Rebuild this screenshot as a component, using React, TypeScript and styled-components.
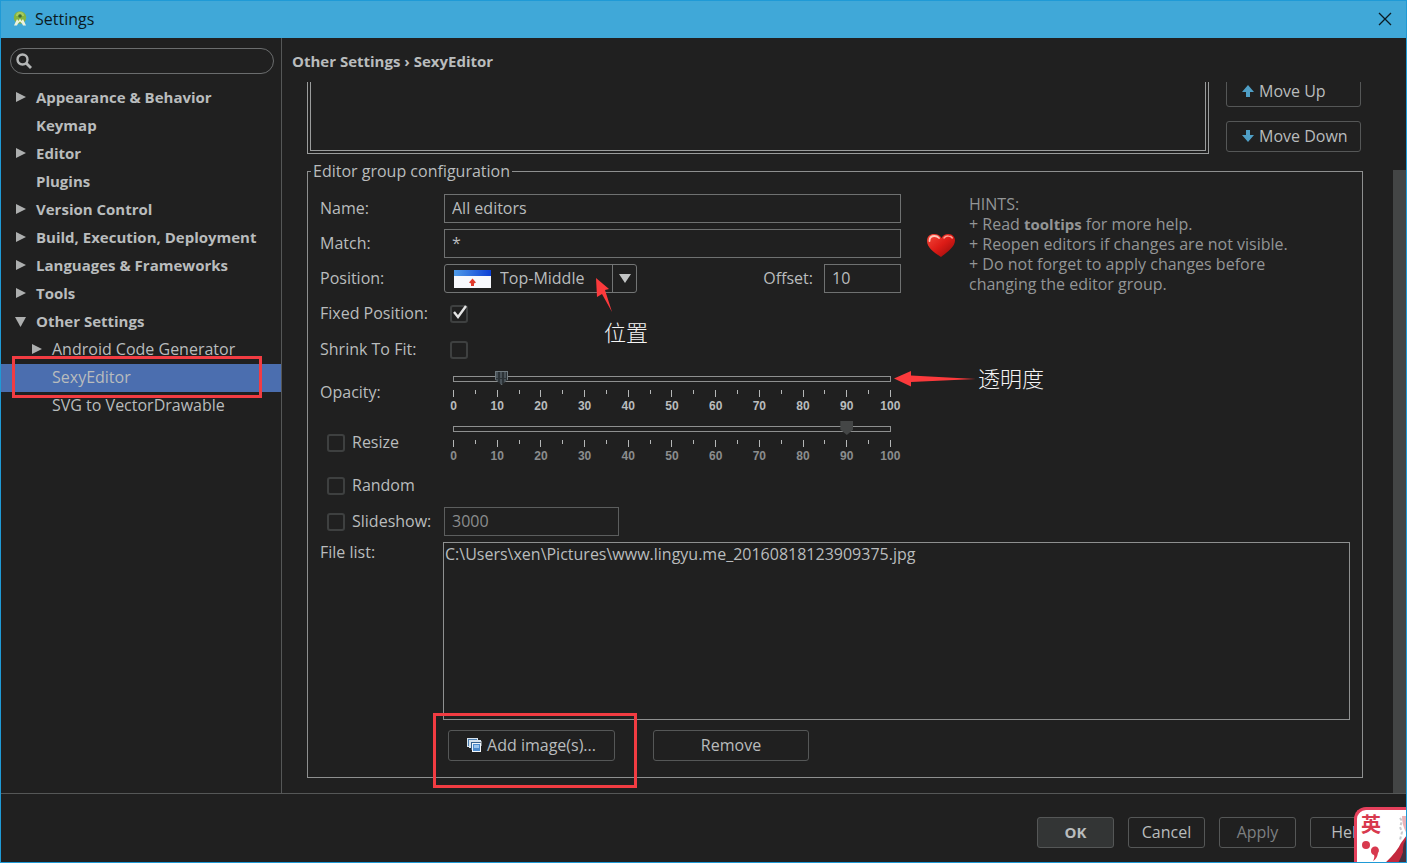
import React, { useState } from "react";
import styled, { createGlobalStyle, css } from "styled-components";

const GlobalStyle = createGlobalStyle`
  *, *::before, *::after { box-sizing: border-box; }
  body { margin: 0; background: #202020; }
  body, button, input, select {
    font-family: "Open Sans", "Noto Sans CJK SC", sans-serif;
    font-size: 16px;
    line-height: 20px;
    color: #b9bcbd;
  }
  b { font-size: 15px; }
  button, input, select { outline: none; }
`;

const Window = styled.div`
  position: relative;
  display: flex;
  flex-direction: column;
  min-height: 100vh;
  overflow: hidden;
  background: #202020;
  border: 1px solid #1f9ad6;
`;

const TitleBar = styled.header`
  display: flex;
  align-items: center;
  height: 37px;
  padding: 0 14px 2px 11px;
  background: #40a8d8;
  color: #0b1a22;
`;

const Title = styled.h1`
  flex: 1;
  margin: 0 0 0 7px;
  font-size: 16px;
  font-weight: 400;
`;

const CloseButton = styled.button`
  display: flex;
  padding: 0;
  border: 0;
  background: none;
  color: #0b1a22;
`;

const Body = styled.div`
  display: flex;
  flex: 1;
`;

const Sidebar = styled.aside`
  flex: none;
  width: 281px;
  border-right: 1px solid #555757;
`;

const SearchBox = styled.label`
  display: flex;
  align-items: center;
  gap: 6px;
  height: 26px;
  margin: 10px 7px 10px 9px;
  padding: 0 12px 0 5px;
  border: 1px solid #6b6d6e;
  border-radius: 13px;
`;

const SearchInput = styled.input`
  flex: 1;
  min-width: 0;
  border: 0;
  background: none;
`;

const Tree = styled.ul`
  margin: 0;
  padding: 0;
  list-style: none;
`;

const TreeRow = styled.li<{ $depth: number; $selected?: boolean }>`
  position: relative;
  display: flex;
  align-items: center;
  height: 28px;
  padding-bottom: 2px;
  padding-left: ${(p) => 14 + p.$depth * 16}px;
  font-size: ${(p) => (p.$depth ? 16 : 15)}px;
  font-weight: ${(p) => (p.$depth ? 400 : 700)};
  background: ${(p) => (p.$selected ? "#4b6eaf" : "none")};
`;

const TreeArrow = styled.span`
  display: flex;
  flex: none;
  width: 21px;
`;

const Marker = styled.span<{ $top: number; $right: number; $bottom: number; $left: number }>`
  position: absolute;
  z-index: 1;
  top: ${(p) => p.$top}px;
  right: ${(p) => p.$right}px;
  bottom: ${(p) => p.$bottom}px;
  left: ${(p) => p.$left}px;
  border: 3px solid #f23c42;
  pointer-events: none;
`;

const Content = styled.main`
  display: flex;
  flex: 1;
  flex-direction: column;
  min-width: 0;
`;

const Breadcrumb = styled.h2`
  height: 44px;
  margin: 0;
  padding: 13px 10px 0;
  font-size: 15px;
  font-weight: 700;
  line-height: 20px;
`;

const Viewport = styled.div`
  display: flex;
  flex: 1;
`;

const Page = styled.div`
  flex: 1;
  min-width: 0;
  padding: 0 30px 15px 25px;
`;

const ScrollTrack = styled.div`
  display: flex;
  width: 13px;
  padding-top: 88px;
`;

const ScrollThumb = styled.div`
  flex: 1;
  background: #434545;
`;

const GroupRow = styled.div`
  display: flex;
  gap: 17px;
  height: 72px;
  margin-bottom: 7px;
  padding-right: 2px;
  overflow: hidden;
`;

const GroupList = styled.div`
  flex: 1;
  padding: 0 2px 2px;
  border: 1px solid #9a9c9c;
  border-top: 0;

  &::before {
    content: "";
    display: block;
    height: 100%;
    border: 1px solid #9a9c9c;
    border-top: 0;
  }
`;

const MoveButtons = styled.div`
  display: flex;
  flex-direction: column;
  justify-content: flex-end;
  gap: 14px;
  width: 135px;
  padding-bottom: 2px;
`;

const Button = styled.button<{ $width?: number; $kind?: "primary" | "disabled"; $start?: boolean }>`
  display: flex;
  flex: none;
  align-items: center;
  justify-content: ${(p) => (p.$start ? "flex-start" : "center")};
  gap: 5px;
  width: ${(p) => (p.$width ? `${p.$width}px` : "auto")};
  height: 31px;
  padding: ${(p) => (p.$start ? "0 0 2px 15px" : "0 0 2px")};
  border: 1px solid #555757;
  border-radius: 3px;
  background: #202020;
  white-space: nowrap;
  ${(p) => p.$kind === "primary" && css`background: #333535; font-size: 15px; font-weight: 700;`}
  ${(p) => p.$kind === "disabled" && css`color: #7d7f80;`}
`;

const Group = styled.fieldset`
  min-width: 0;
  margin: 0;
  padding: 13px 12px 16px;
  border: 1px solid #8e9090;
`;

const Legend = styled.legend`
  margin-left: -9px;
  padding: 0 2px;
  line-height: 20px;
`;

const FormTop = styled.div`
  display: flex;
  align-items: flex-start;
  gap: 25px;
  margin-bottom: 6px;
`;

const Form = styled.div`
  display: flex;
  flex: none;
  flex-direction: column;
  gap: 6px;
  width: 581px;
`;

const Row = styled.div<{ $height: number }>`
  position: relative;
  display: flex;
  align-items: center;
  height: ${(p) => p.$height}px;
`;

const Label = styled.label`
  flex: none;
  width: 124px;
  padding-bottom: 2px;
`;

const CheckLabel = styled.label`
  display: flex;
  flex: none;
  align-items: center;
  gap: 7px;
  width: 124px;
  padding-left: 7px;
  white-space: nowrap;
`;

const CheckText = styled.span`
  padding-bottom: 2px;
`;

const TextInput = styled.input<{ $width?: number }>`
  width: ${(p) => (p.$width ? `${p.$width}px` : "auto")};
  flex: ${(p) => (p.$width ? "none" : "1")};
  height: 29px;
  padding: 0 7px 2px;
  border: 1px solid #6f7171;
  background: none;

  &:disabled { color: #8b8d8e; border-color: #5c5e5e; }
`;

const SelectBox = styled.div`
  position: relative;
  width: 193px;
  height: 29px;
`;

const Select = styled.select`
  width: 100%;
  height: 29px;
  padding: 0 20px 2px 55px;
  appearance: none;
  border: 1px solid #737575;
  border-radius: 3px;
  background: none;
`;

const SelectPicture = styled.svg`
  position: absolute;
  top: 6px;
  left: 10px;
  pointer-events: none;
`;

const SelectArrow = styled.span`
  position: absolute;
  top: 1px;
  right: 0;
  display: flex;
  align-items: center;
  justify-content: center;
  width: 25px;
  height: 27px;
  border-left: 1px solid #737575;
  pointer-events: none;
`;

const OffsetLabel = styled.label`
  margin-left: auto;
  margin-right: 11px;
  padding-bottom: 2px;
`;

const CheckBox = styled.input`
  display: grid;
  place-items: center;
  flex: none;
  width: 18px;
  height: 18px;
  margin: 0;
  appearance: none;
  border: 2px solid #3e4040;
  border-radius: 3px;
`;

const CheckCell = styled.span`
  position: relative;
  display: flex;
  margin-left: 6px;
`;

const CheckMark = styled.svg`
  position: absolute;
  top: 0;
  left: 2px;
  pointer-events: none;
`;

const SliderBox = styled.div`
  flex: none;
  width: 438px;
  height: 44px;
  margin-left: 9px;
  padding-top: 5px;
`;

const Rail = styled.div`
  height: 6px;
  margin-bottom: 8px;
  border: 1px solid #8e9090;
`;

const Range = styled.input`
  display: block;
  width: calc(100% + 14px);
  height: 14px;
  margin: -6px -7px;
  appearance: none;
  background: none;

  &::-webkit-slider-thumb {
    appearance: none;
    width: 13px;
    height: 14px;
    clip-path: polygon(0 0, 100% 0, 100% 60%, 50% 100%, 0 60%);
    background: ${(p) =>
      p.disabled
        ? "#444646"
        : "linear-gradient(#2c3236, #2c3236) 50% 50% / 100% 1px no-repeat, repeating-linear-gradient(90deg, #4a5359 0 2px, #2c3236 2px 4px)"};
    border: ${(p) => (p.disabled ? "0" : "1px solid #717b81")};
  }
`;

const Ticks = styled.div`
  display: flex;
  justify-content: space-between;
  height: 7px;
  margin-bottom: 3px;
`;

const Tick = styled.span<{ $major: boolean }>`
  width: 1px;
  height: ${(p) => (p.$major ? 7 : 4)}px;
  background: #b5b7b7;
`;

const TickLabels = styled.div<{ $dim?: boolean }>`
  display: flex;
  justify-content: space-between;
  font: 700 12px/12px "Liberation Sans", Arial, sans-serif;
  color: ${(p) => (p.$dim ? "#8b8d8e" : "#b9bcbd")};
`;

const TickLabel = styled.span`
  display: flex;
  justify-content: center;
  width: 1px;
`;

const Hints = styled.div`
  display: flex;
  align-items: center;
  gap: 13px;
  color: #939596;

  p { max-width: 340px; margin: 0; padding-bottom: 2px; }
  svg { flex: none; }
`;

const FileRow = styled.div`
  display: flex;
`;

const FileColumn = styled.div`
  flex: 1;
  min-width: 0;
`;

const FileList = styled.ul`
  height: 178px;
  margin: 0 0 10px -1px;
  padding: 1px;
  border: 1px solid #8e9090;
  list-style: none;
`;

const FileButtons = styled.div`
  display: flex;
  gap: 38px;
  padding-left: 4px;
`;

const Marked = styled.span`
  position: relative;
  display: flex;
`;

const Note = styled.span<{ $left: number; $top: number }>`
  position: absolute;
  z-index: 1;
  left: ${(p) => p.$left}px;
  top: ${(p) => p.$top}px;
  font-family: "Noto Sans CJK SC", sans-serif;
  font-size: 22px;
  font-weight: 300;
  line-height: 28px;
  color: #f4f4f4;
  white-space: nowrap;
`;

const NoteArrow = styled.svg<{ $left: number; $top: number }>`
  position: absolute;
  z-index: 1;
  left: ${(p) => p.$left}px;
  top: ${(p) => p.$top}px;
  pointer-events: none;
`;

const Footer = styled.footer`
  display: flex;
  justify-content: flex-end;
  gap: 14px;
  padding: 23px 19px 14px;
  border-top: 1px solid #555757;
`;

const ImeBadge = styled.div`
  position: absolute;
  right: -1px;
  bottom: -1px;
  width: 53px;
  height: 56px;
  overflow: hidden;
  border: 3px solid #e5405c;
  border-right: 0;
  border-bottom: 0;
  border-radius: 12px 0 0 0;
  background: #fff;
`;

const ImeText = styled.span`
  position: absolute;
  top: 2px;
  left: 4px;
  font: 700 20px/24px "Noto Sans CJK SC", sans-serif;
  color: #d8394e;
`;

const ImeArt = styled.svg`
  position: absolute;
  inset: 0;
`;

type Node = { label: string; depth: number; arrow?: "right" | "down"; selected?: boolean };

const nodes: Node[] = [
  { label: "Appearance & Behavior", depth: 0, arrow: "right" },
  { label: "Keymap", depth: 0 },
  { label: "Editor", depth: 0, arrow: "right" },
  { label: "Plugins", depth: 0 },
  { label: "Version Control", depth: 0, arrow: "right" },
  { label: "Build, Execution, Deployment", depth: 0, arrow: "right" },
  { label: "Languages & Frameworks", depth: 0, arrow: "right" },
  { label: "Tools", depth: 0, arrow: "right" },
  { label: "Other Settings", depth: 0, arrow: "down" },
  { label: "Android Code Generator", depth: 1, arrow: "right" },
  { label: "SexyEditor", depth: 1, selected: true },
  { label: "SVG to VectorDrawable", depth: 1 },
];

const steps = Array.from({ length: 21 }, (_, i) => i);

function Slider(props: { id: string; label?: string; start: number; disabled?: boolean }) {
  const [value, setValue] = useState(props.start);
  return (
    <SliderBox>
      <Rail>
        <Range
          id={props.id}
          type="range"
          min={0}
          max={100}
          aria-label={props.label}
          value={value}
          disabled={props.disabled}
          onChange={(e) => setValue(Number(e.target.value))}
        />
      </Rail>
      <Ticks>
        {steps.map((i) => (
          <Tick key={i} $major={i % 2 === 0} />
        ))}
      </Ticks>
      <TickLabels $dim={props.disabled}>
        {steps.filter((i) => i % 2 === 0).map((i) => (
          <TickLabel key={i}>{i * 5}</TickLabel>
        ))}
      </TickLabels>
    </SliderBox>
  );
}

function MoveIcon({ down }: { down?: boolean }) {
  return (
    <svg width="12" height="12" viewBox="0 0 12 12" aria-hidden="true">
      <path
        d={down ? "M4 0h4v5h4L6 12 0 5h4z" : "M6 0l6 7H8v5H4V7H0z"}
        fill="#4f9fc6"
      />
    </svg>
  );
}

function AppIcon() {
  return (
    <svg width="16" height="16" viewBox="0 0 16 16" aria-hidden="true">
      <circle cx="8" cy="6.500" r="6.200" fill="#86b440" />
      <path d="M4 5a4 4 0 0 1 8 0z" fill="#a8cc5e" />
      <circle cx="8" cy="5" r="1.800" fill="#3e6a35" />
      <path d="M5 8L2 14.500h3l1-2 2-2 2 2 1 2h3L11 8 9.500 10 8 7.500 6.500 10z" fill="#eef2dc" />
    </svg>
  );
}

function Heart() {
  return (
    <svg width="30" height="25" viewBox="0 0 30 25" aria-hidden="true">
      <defs>
        <linearGradient id="heart" x1="0" y1="0" x2="1" y2="1">
          <stop offset="0" stopColor="#f5483a" />
          <stop offset="0.5" stopColor="#dc1b16" />
          <stop offset="1" stopColor="#8e0b0b" />
        </linearGradient>
      </defs>
      <path
        d="M15 24C9 20 1 15 1 8 1 3.500 4 1 8 1c3.500 0 6 1.500 7.500 4C17 2.500 19 1 22.500 1 26.500 1 29 4 29 7.500 29 14 20 20 15 24z"
        fill="url(#heart)"
      />
      <path d="M3.500 8C3.500 4.500 6 3 8.500 3c2 0 3.500.8 4.500 2" fill="none" stroke="#ffc5b8" strokeWidth="1.800" strokeLinecap="round" />
      <path d="M18 5c1-1.500 2.500-2.200 4.500-2 1.500 0 3 .8 3.800 2" fill="none" stroke="#ff9d8e" strokeWidth="1.500" strokeLinecap="round" />
    </svg>
  );
}

function ImagesIcon() {
  return (
    <svg width="15" height="16" viewBox="0 0 15 16" aria-hidden="true">
      <rect x="0.500" y="1.500" width="10" height="8" fill="#4d7fb0" stroke="#d8e4ee" />
      <path d="M3 11V4h11" fill="none" stroke="#d8e4ee" strokeWidth="2" />
      <path d="M14 4v5" stroke="#d8e4ee" />
      <rect x="4" y="5" width="9" height="8" fill="#35628f" />
      <rect x="5.500" y="6.500" width="8" height="8" fill="#4f8ccc" stroke="#f2f7fb" />
      <rect x="7" y="8" width="5" height="3" fill="#9cc6ee" />
    </svg>
  );
}

export default function App() {
  const [fixed, setFixed] = useState(true);
  return (
    <>
      <GlobalStyle />
      <Window>
        <TitleBar>
          <AppIcon />
          <Title>Settings</Title>
          <CloseButton aria-label="Close">
            <svg width="14" height="14" viewBox="0 0 14 14">
              <path d="M1 1l12 12M13 1L1 13" stroke="currentColor" strokeWidth="1.300" />
            </svg>
          </CloseButton>
        </TitleBar>
        <Body>
          <Sidebar>
            <SearchBox>
              <svg width="16" height="16" viewBox="0 0 16 16" aria-hidden="true">
                <circle cx="6.500" cy="6.500" r="5" fill="none" stroke="#b4b6b6" strokeWidth="2.400" />
                <path d="M10 10l5 5" stroke="#b4b6b6" strokeWidth="2.800" />
              </svg>
              <SearchInput type="text" aria-label="Search settings" />
            </SearchBox>
            <Tree>
              {nodes.map((n) => (
                <TreeRow key={n.label} $depth={n.depth} $selected={n.selected}>
                  <TreeArrow>
                    {n.arrow && (
                      <svg width="11" height="12" viewBox="0 0 11 12" aria-hidden="true">
                        <path d={n.arrow === "right" ? "M1 1l10 5-10 5z" : "M0 2h11L5.500 12z"} fill="#adafaf" />
                      </svg>
                    )}
                  </TreeArrow>
                  {n.label}
                  {n.selected && <Marker $top={-8} $right={19} $bottom={-6} $left={11} />}
                </TreeRow>
              ))}
            </Tree>
          </Sidebar>
          <Content>
            <Breadcrumb>Other Settings › SexyEditor</Breadcrumb>
            <Viewport>
              <Page>
                <GroupRow>
                  <GroupList />
                  <MoveButtons>
                    <Button $start><MoveIcon />Move Up</Button>
                    <Button $start><MoveIcon down />Move Down</Button>
                  </MoveButtons>
                </GroupRow>
                <Group>
                  <Legend>Editor group configuration</Legend>
                  <FormTop>
                    <Form>
                      <Row $height={29}>
                        <Label htmlFor="name">Name:</Label>
                        <TextInput id="name" defaultValue="All editors" />
                      </Row>
                      <Row $height={29}>
                        <Label htmlFor="match">Match:</Label>
                        <TextInput id="match" defaultValue="*" />
                      </Row>
                      <Row $height={29}>
                        <Label htmlFor="position">Position:</Label>
                        <SelectBox>
                          <Select id="position" defaultValue="Top-Middle">
                            <option>Top-Middle</option>
                          </Select>
                          <SelectPicture width="37" height="18" viewBox="0 0 37 18" aria-hidden="true">
                            <defs>
                              <linearGradient id="bar" x1="0" x2="1">
                                <stop offset="0" stopColor="#4f9be8" />
                                <stop offset="1" stopColor="#0c3fd6" />
                              </linearGradient>
                            </defs>
                            <rect width="37" height="18" fill="#f7f8fc" />
                            <rect width="37" height="6" fill="url(#bar)" />
                            <path d="M18.500 8.500l3.500 4-2 1v2.500h-3v-2.500l-2-1z" fill="#e0392c" />
                          </SelectPicture>
                          <SelectArrow>
                            <svg width="12" height="9" viewBox="0 0 12 9" aria-hidden="true">
                              <path d="M0 0h12L6 9z" fill="#c3c5c5" />
                            </svg>
                          </SelectArrow>
                        </SelectBox>
                        <OffsetLabel htmlFor="offset">Offset:</OffsetLabel>
                        <TextInput id="offset" $width={77} defaultValue="10" />
                        <NoteArrow $left={275} $top={14} width="20" height="36" viewBox="0 0 20 36">
                          <path d="M1 0l13 11-4 1 7 22L7 16l-5 3z" fill="#fb3a3c" />
                        </NoteArrow>
                        <Note $left={284} $top={53}>位置</Note>
                      </Row>
                      <Row $height={30}>
                        <Label htmlFor="fixed">Fixed Position:</Label>
                        <CheckCell>
                          <CheckBox
                            id="fixed"
                            type="checkbox"
                            checked={fixed}
                            onChange={(e) => setFixed(e.target.checked)}
                          />
                          {fixed && (
                            <CheckMark width="16" height="16" viewBox="0 0 16 16">
                              <path d="M2 7l4 5 8-11" fill="none" stroke="#e4e4e4" strokeWidth="2.400" />
                            </CheckMark>
                          )}
                        </CheckCell>
                      </Row>
                      <Row $height={30}>
                        <Label htmlFor="shrink">Shrink To Fit:</Label>
                        <CheckCell>
                          <CheckBox id="shrink" type="checkbox" />
                        </CheckCell>
                      </Row>
                      <Row $height={44}>
                        <Label htmlFor="opacity">Opacity:</Label>
                        <Slider id="opacity" start={11} />
                        <NoteArrow $left={574} $top={0} width="84" height="16" viewBox="0 0 84 16">
                          <path d="M0 7.500L17 0v4.500L82 8 17 11v4.500z" fill="#fb3a3c" />
                        </NoteArrow>
                        <Note $left={658} $top={-8}>透明度</Note>
                      </Row>
                      <Row $height={44}>
                        <CheckLabel>
                          <CheckBox type="checkbox" />
                          <CheckText>Resize</CheckText>
                        </CheckLabel>
                        <Slider id="resize" label="Resize percentage" start={90} disabled />
                      </Row>
                      <Row $height={30}>
                        <CheckLabel>
                          <CheckBox type="checkbox" />
                          <CheckText>Random</CheckText>
                        </CheckLabel>
                      </Row>
                      <Row $height={29}>
                        <CheckLabel>
                          <CheckBox type="checkbox" />
                          <CheckText>Slideshow:</CheckText>
                        </CheckLabel>
                        <TextInput $width={175} defaultValue="3000" aria-label="Slideshow interval" disabled />
                      </Row>
                    </Form>
                    <Hints>
                      <Heart />
                      <p>
                        HINTS:<br />
                        + Read <b>tooltips</b> for more help.<br />
                        + Reopen editors if changes are not visible.<br />
                        + Do not forget to apply changes before<br />
                        changing the editor group.
                      </p>
                    </Hints>
                  </FormTop>
                  <FileRow>
                    <Label as="span">File list:</Label>
                    <FileColumn>
                      <FileList aria-label="File list">
                        <li>C:\Users\xen\Pictures\www.lingyu.me_20160818123909375.jpg</li>
                      </FileList>
                      <FileButtons>
                        <Marked>
                          <Button $width={167}><ImagesIcon />Add image(s)...</Button>
                          <Marker $top={-17} $right={-22} $bottom={-27} $left={-15} />
                        </Marked>
                        <Button $width={156}>Remove</Button>
                      </FileButtons>
                    </FileColumn>
                  </FileRow>
                </Group>
              </Page>
              <ScrollTrack>
                <ScrollThumb />
              </ScrollTrack>
            </Viewport>
          </Content>
        </Body>
        <Footer>
          <Button $width={77} $kind="primary">OK</Button>
          <Button $width={77}>Cancel</Button>
          <Button $width={77} $kind="disabled" disabled>Apply</Button>
          <Button $width={77}>Help</Button>
        </Footer>
        <ImeBadge>
          <ImeText>英</ImeText>
          <ImeArt width="50" height="53" viewBox="0 0 50 53" aria-hidden="true">
            <circle cx="9" cy="35" r="4" fill="#d8394e" />
            <path d="M14 41a4 4 0 1 1 7 2q-1 6-5 8 2-4 1-6-3-1-3-4z" fill="#d8394e" />
            <path d="M50 25L44 33Q40 42 28 53h22z" fill="#c3283d" />
            <path d="M50 28q-5 6-4 14-2 6-5 11h9z" fill="#47303f" />
            <path d="M43 8l2 3-2 6 2 5-2 8" fill="none" stroke="#c9c9cd" strokeWidth="2" strokeDasharray="3 2" />
            <path d="M45 6h5v18q-5-8-5-18z" fill="#e9b3b8" />
          </ImeArt>
        </ImeBadge>
      </Window>
    </>
  );
}
